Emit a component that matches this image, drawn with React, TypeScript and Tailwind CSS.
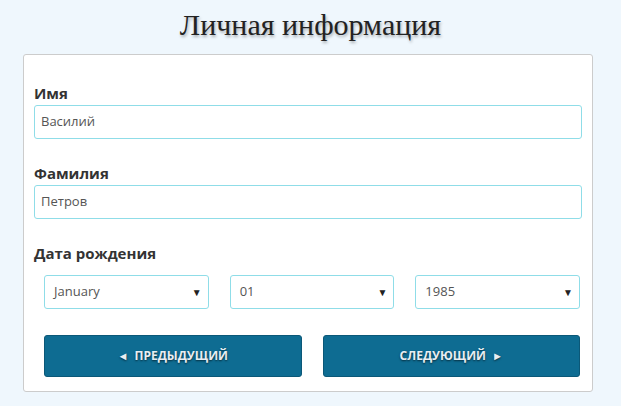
export default function App() {
  const fields = [
    { label: "Имя", value: "Василий" },
    { label: "Фамилия", value: "Петров" },
  ];
  const selects = ["January", "01", "1985"];

  return (
    <div className="min-h-[406px] w-full bg-[#eff7fd] font-['Open_Sans',sans-serif]">
      <h1 className="pt-[7px] text-center font-['Liberation_Serif',serif] text-[30px] leading-[36px] text-[#222] [text-shadow:1px_2px_3px_rgba(0,0,0,0.3)]">
        Личная информация
      </h1>

      <div className="mx-[23px] mt-[11px] w-[570px] rounded-[3px] border border-[#ccc] bg-white px-[10px] pt-[28px] pb-[14px]">
        {fields.map((f, i) => (
          <div key={f.label} className={i > 0 ? "mt-[24px]" : ""}>
            <label className="mb-[2px] block text-[15px] leading-[20px] font-bold text-[#333]">
              {f.label}
            </label>
            <div className="flex h-[34px] items-center rounded-[3px] border border-[#8fdde8] px-[6px] text-[13px] text-[#555]">
              {f.value}
            </div>
          </div>
        ))}

        <div className="mt-[24px]">
          <label className="block text-[15px] leading-[20px] font-bold text-[#333]">
            Дата рождения
          </label>
          <div className="mt-[12px] flex gap-[21px] pl-[10px] pr-[2px]">
            {selects.map((s) => (
              <div
                key={s}
                className="flex h-[34px] flex-1 items-center justify-between rounded-[3px] border border-[#8fdde8] pr-[6px] pl-[9px] text-[13px] text-[#555]"
              >
                <span>{s}</span>
                <span className="text-[10px] text-[#222]">▼</span>
              </div>
            ))}
          </div>
        </div>

        <div className="mt-[26px] flex gap-[21px] pl-[10px] pr-[2px]">
          <button className="flex h-[42px] flex-1 items-center justify-center gap-[6px] rounded-[3px] border border-[#0b5878] bg-[#0e6c92] text-[12px] font-bold text-[#e8eef2] [text-shadow:0_1px_2px_rgba(0,0,0,0.6)]">
            <span className="text-[11px]">◄</span>
            <span>ПРЕДЫДУЩИЙ</span>
          </button>
          <button className="flex h-[42px] flex-1 items-center justify-center gap-[6px] rounded-[3px] border border-[#0b5878] bg-[#0e6c92] text-[12px] font-bold text-[#e8eef2] [text-shadow:0_1px_2px_rgba(0,0,0,0.6)]">
            <span>СЛЕДУЮЩИЙ</span>
            <span className="text-[11px]">►</span>
          </button>
        </div>
      </div>
    </div>
  );
}
